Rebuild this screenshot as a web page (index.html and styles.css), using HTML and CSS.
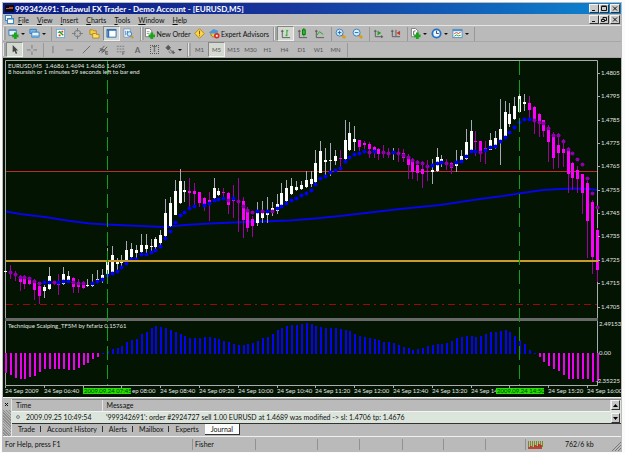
FILE: index.html
```html
<!DOCTYPE html>
<html lang="en">
<head>
    <meta charset="UTF-8">
    <meta name="viewport" content="width=device-width, initial-scale=1.0">
    <title>999342691: Tadawul FX Trader - Demo Account - [EURUSD,M5]</title>
    <link rel="stylesheet" href="styles.css">
</head>
<body>
    <div class="window">
        <header class="title-bar">
            <svg class="app-icon" viewBox="0 0 9 9"><rect y="1" width="9" height="7" fill="#0c0c14"/><path d="M4 3H8V5H4Z" fill="#c83a20"/><path d="M1 4H4V5H1Z" fill="#8c6c30"/></svg>
            <h1>999342691: Tadawul FX Trader - Demo Account - [EURUSD,M5]</h1>
            <div class="window-buttons">
                <button aria-label="Minimize"><svg viewBox="0 0 8 7"><path d="M2 5.5H5"/></svg></button>
                <button aria-label="Maximize"><svg viewBox="0 0 8 7"><path d="M1.5 1.5H6.5V5.5H1.5ZM1.5 1H6.5"/></svg></button>
                <button class="close" aria-label="Close"><svg viewBox="0 0 8 7"><path d="M2 1.5L6 5.5M6 1.5L2 5.5"/></svg></button>
            </div>
        </header>

        <nav class="menu-bar">
            <svg class="menu-icon" viewBox="0 0 9 9"><rect x=".5" y=".5" width="6" height="5" fill="#eef6fc" stroke="#3c86c4"/><rect x="2.5" y="3.5" width="6" height="5" fill="#fff" stroke="#3c86c4"/><path d="M2 4H9" stroke="#3c86c4"/></svg>
            <a href="#file"><u>F</u>ile</a>
            <a href="#view"><u>V</u>iew</a>
            <a href="#insert"><u>I</u>nsert</a>
            <a href="#charts"><u>C</u>harts</a>
            <a href="#tools"><u>T</u>ools</a>
            <a href="#window"><u>W</u>indow</a>
            <a href="#help"><u>H</u>elp</a>
            <div class="window-buttons">
                <button aria-label="Minimize chart"><svg viewBox="0 0 8 7"><path d="M2 5.5H5"/></svg></button>
                <button aria-label="Restore chart"><svg viewBox="0 0 8 7"><path d="M3 3V1.5H6.5V4.5H5M1.5 3.5H4.5V5.5H1.5Z"/></svg></button>
                <button class="close" aria-label="Close chart"><svg viewBox="0 0 8 7"><path d="M2 1.5L6 5.5M6 1.5L2 5.5"/></svg></button>
            </div>
        </nav>

        <div class="toolbar">
            <span class="grip"></span>
            <button class="tool drop" aria-label="New chart"><svg viewBox="0 0 12 12"><path d="M1 2H9V8H1Z" fill="#e4f2fc" stroke="#2f7cc0"/><path d="M1 2.5H9" stroke="#2f7cc0"/><path d="M8 5V12M4.500 8.500H11.500" stroke="#1ba51b" stroke-width="3"/></svg></button>
            <button class="tool drop" aria-label="Profiles"><svg viewBox="0 0 12 12"><path d="M1 1.500H8V6H1Z" fill="#7ab8e8" stroke="#2f7cc0"/><path d="M3 4.500H11V10H3Z" fill="#e4f2fc" stroke="#2f7cc0"/><path d="M3 9H11" stroke="#6aa8dc" stroke-width="2"/></svg></button>
            <span class="sep"></span>
            <button class="tool" aria-label="Market Watch"><svg viewBox="0 0 12 12"><rect x="1.500" y="1.500" width="9" height="9" fill="#fff" stroke="#6aa8dc"/><path d="M2.500 5.500L5 3L7 5Z" fill="#1ba51b"/><path d="M5 4L9 8" stroke="#1ba51b" stroke-width="1.500"/><path d="M4 7H6V9H4ZM7 3H9V5H7Z" fill="#d8342a"/></svg></button>
            <button class="tool" aria-label="Data Window"><svg viewBox="0 0 12 12" fill="none" stroke="#777"><circle cx="6" cy="6" r="3.500"/><path d="M6 0V4M6 8V12M0 6H4M8 6H12"/></svg></button>
            <button class="tool" aria-label="Navigator"><svg viewBox="0 0 12 12"><path d="M1 2H4L5 3H8V7H1Z" fill="#f6cf4a" stroke="#b88614"/><path d="M4 6H7L8 7H11V11H4Z" fill="#fbdf72" stroke="#b88614"/></svg></button>
            <button class="tool pressed" aria-label="Terminal"><svg viewBox="0 0 12 12"><path d="M1 1.500H11V10H1Z" fill="#fff" stroke="#2f6cb0"/><path d="M2.500 1V10M1 2H11" stroke="#2f6cb0" stroke-width="2"/></svg></button>
            <button class="tool" aria-label="Strategy Tester"><svg viewBox="0 0 12 12"><path d="M1 1H8V10H1Z" fill="#fff" stroke="#7a9cbc"/><path d="M3 3V8M5 3V6" stroke="#4a7cac"/><circle cx="7" cy="6.500" r="2.500" fill="#cfe8fa" stroke="#2f7cc0"/><path d="M9 8.500L11 11" stroke="#c89a20" stroke-width="2"/></svg></button>
            <span class="sep"></span>
            <span class="grip"></span>
            <button class="tool wide order"><svg viewBox="0 0 12 12"><path d="M1.500 .5H6L8.500 3V9.500H1.500Z" fill="#fff" stroke="#777"/><path d="M3 4H6M3 6H6" stroke="#999"/><path d="M8.500 5V12M5 8.500H12" stroke="#1ba51b" stroke-width="3"/></svg>New Order</button>
            <button class="tool" aria-label="MetaEditor"><svg viewBox="0 0 12 12"><path d="M6 .8L11.200 6L6 11.200L.8 6Z" fill="#fbd54c" stroke="#b8860b"/><path d="M6 3V7M6 8V9" stroke="#7a5200"/></svg></button>
            <button class="tool wide advisors"><svg viewBox="0 0 12 12"><path d="M0 5L5 1L10 3L9 7L4 8Z" fill="#4a98d8"/><path d="M2 6C2 11 8 11 9 6" fill="#f2c64c" stroke="#9a7420"/><circle cx="8.500" cy="8.500" r="3" fill="#dd2c1e"/><rect x="7.500" y="7.500" width="2" height="2" fill="#fff"/></svg>Expert Advisors</button>
            <span class="sep"></span>
            <span class="grip"></span>
            <button class="tool pressed" aria-label="Bar Chart"><svg viewBox="0 0 12 12" fill="none"><path d="M2.500 2V10.500H11" stroke="#555"/><path d="M1 3.500H4" stroke="#555"/><path d="M7.500 2V9M6 8H7.500M7.500 3H9" stroke="#1ba51b"/></svg></button>
            <button class="tool" aria-label="Candlesticks"><svg viewBox="0 0 12 12" fill="none"><path d="M2.500 2V10.500H11M1 3.500H4" stroke="#555"/><path d="M7.500 0V9" stroke="#087808"/><rect x="6" y="2" width="3" height="5" fill="#1fc41f" stroke="#087808"/></svg></button>
            <button class="tool" aria-label="Line Chart"><svg viewBox="0 0 12 12" fill="none"><path d="M2.500 2V10.500H11M1 3.500H4" stroke="#555"/><path d="M3 8L6 4L10 7" stroke="#1ba51b"/></svg></button>
            <span class="sep"></span>
            <button class="tool" aria-label="Zoom In"><svg viewBox="0 0 12 12"><path d="M7 7L11 11" stroke="#d4a020" stroke-width="3"/><circle cx="5" cy="5" r="3.800" fill="#d8efff" stroke="#2f7cc0"/><path d="M3 5H7M5 3V7" stroke="#1d62a8"/></svg></button>
            <button class="tool" aria-label="Zoom Out"><svg viewBox="0 0 12 12"><path d="M7 7L11 11" stroke="#d4a020" stroke-width="3"/><circle cx="5" cy="5" r="3.800" fill="#d8efff" stroke="#2f7cc0"/><path d="M3 5H7" stroke="#1d62a8"/></svg></button>
            <span class="sep"></span>
            <button class="tool" aria-label="Auto Scroll"><svg viewBox="0 0 12 12"><path d="M2.500 2V9.500H11M1 3.500H4M9.500 8V11" fill="none" stroke="#555"/><path d="M5 3L9 5.500L5 8Z" fill="#1ba51b"/></svg></button>
            <button class="tool" aria-label="Chart Shift"><svg viewBox="0 0 12 12"><path d="M2.500 2V9.500H11M1 3.500H4M6.500 2V9" fill="none" stroke="#555"/><path d="M11 3L7 5.500L11 8Z" fill="#c4382c"/></svg></button>
            <span class="sep"></span>
            <button class="tool drop" aria-label="Indicators"><svg viewBox="0 0 12 12"><path d="M1.500 .5H6L8.500 3V9.500H1.500Z" fill="#fff" stroke="#777"/><path d="M4 8V3.500L6 3" fill="none" stroke="#555"/><path d="M8 5V12M4.500 8.500H11.500" stroke="#1ba51b" stroke-width="3"/></svg></button>
            <button class="tool drop" aria-label="Periods"><svg viewBox="0 0 12 12"><circle cx="6" cy="6" r="4.500" fill="#eaf6ff" stroke="#2370c4" stroke-width="2"/><path d="M6 3V6H8.500" fill="none" stroke="#345"/></svg></button>
            <button class="tool drop" aria-label="Templates"><svg viewBox="0 0 12 12"><rect x="1" y="1.500" width="10" height="9" fill="#fff" stroke="#4a90cc"/><path d="M1 2.500H11" stroke="#4a90cc" stroke-width="2"/><path d="M2.500 6L5 5L7 6L9.500 4.500" fill="none" stroke="#c4382c"/><path d="M2.500 9L5 7.500L7 8.500L9.500 8" fill="none" stroke="#1ba51b"/></svg></button>
            <span class="sep"></span>
        </div>

        <div class="toolbar">
            <span class="grip"></span>
            <button class="tool pressed" aria-label="Cursor"><svg viewBox="0 0 12 12"><path d="M4 1V9L6 7.500L7.500 11L9 10L7.500 7H10Z" fill="#444"/></svg></button>
            <button class="tool" aria-label="Crosshair"><svg viewBox="0 0 12 12" stroke="#777"><path d="M6.500 1V5M6.500 8V12M1 6.500H5M8 6.500H12"/></svg></button>
            <span class="sep"></span>
            <button class="tool" aria-label="Vertical line"><svg viewBox="0 0 12 12" stroke="#777"><path d="M6.500 2V10"/></svg></button>
            <button class="tool" aria-label="Horizontal line"><svg viewBox="0 0 12 12" stroke="#777"><path d="M2 6.500H10"/></svg></button>
            <button class="tool" aria-label="Trendline"><svg viewBox="0 0 12 12" stroke="#666"><path d="M2 10L10 2"/></svg></button>
            <button class="tool" aria-label="Equidistant channel"><svg viewBox="0 0 12 12" stroke="#555" fill="none"><path d="M1 9L7 2M4 10L10 3M2 5L8 7M3 7L7 8.500M8 8.500H11M8 11H11M8.500 8V11"/></svg></button>
            <button class="tool" aria-label="Fibonacci retracement"><svg viewBox="0 0 12 12" stroke="#777" fill="none"><path d="M2 2.500H10M2 5.500H10M2 8.500H7" stroke-dasharray="2 1"/><path d="M8.500 8V12M8 8.500H11M8 10.500H10"/></svg></button>
            <button class="tool letter" aria-label="Text">A</button>
            <button class="tool letter label" aria-label="Text label"><span>T</span></button>
            <button class="tool drop" aria-label="Arrows"><svg viewBox="0 0 12 12" stroke="#555"><path d="M1 4L3.500 1.500L6 4L3.500 6.500Z" fill="#555"/><path d="M5 6L9 9M9 7V11M7 9.500H11M4 8L6 10" fill="none"/></svg></button>
            <span class="sep"></span>
            <span class="grip"></span>
            <button class="tool period">M1</button>
            <button class="tool period pressed">M5</button>
            <button class="tool period">M15</button>
            <button class="tool period">M30</button>
            <button class="tool period">H1</button>
            <button class="tool period">H4</button>
            <button class="tool period">D1</button>
            <button class="tool period">W1</button>
            <button class="tool period">MN</button>
            <span class="sep"></span>
        </div>

        <main class="chart">
            <svg id="chart" viewBox="3 58 618 339" role="img" aria-label="EURUSD M5 chart"></svg>
        </main>

        <section class="terminal">
            <div class="terminal-strip"><button aria-label="Close terminal"><svg viewBox="0 0 5 5"><path d="M1 1L4 4M4 1L1 4" stroke="#111"/></svg></button></div>
            <div class="terminal-main">
                <div class="journal">
                    <table>
                        <thead>
                            <tr><th class="time">Time</th><th>Message</th></tr>
                        </thead>
                        <tbody>
                            <tr><td class="time"><i></i>2009.09.25 10:49:54</td><td>'999342691': order #2924727 sell 1.00 EURUSD at 1.4689 was modified -&gt; sl: 1.4706 tp: 1.4676</td></tr>
                        </tbody>
                    </table>
                    <div class="scroll">
                        <button aria-label="Scroll up"><svg viewBox="0 0 7 7"><path d="M1 5L3.500 2L6 5Z"/></svg></button>
                        <button aria-label="Scroll down"><svg viewBox="0 0 7 7"><path d="M1 2L3.500 5L6 2Z"/></svg></button>
                    </div>
                </div>
                <div class="tabs">
                    <button>Trade</button>
                    <button>Account History</button>
                    <button>Alerts</button>
                    <button>Mailbox</button>
                    <button>Experts</button>
                    <button class="active">Journal</button>
                </div>
            </div>
        </section>

        <footer class="status-bar">
            <span>For Help, press F1</span>
            <span>Fisher</span>
            <span></span>
            <span></span>
            <span></span>
            <span></span>
            <span></span>
            <span></span>
            <span class="traffic">
                <svg viewBox="0 0 15 8"><path d="M0 3H15" stroke="#7c8c1c" stroke-width="6" stroke-dasharray="1 1"/><path d="M1 8V6M3 8V5M5 8V6M7 8V4M9 8V5M11 8V3M13 8V4" stroke="#b82010" stroke-width="1.500"/></svg>
                762/6 kb
            </span>
            <svg class="size-grip" viewBox="0 0 9 9"><path d="M0 9L9 0M3 9L9 3M6 9L9 6" stroke="#777"/></svg>
        </footer>
    </div>

    <script src="chart.js"></script>
</body>
</html>
```

FILE: styles.css
```css
:root {
    --face: #b9bab9;
    --light: #e4e6e4;
    --shadow: #858685;
    --pressed: #d3d9d1;
}

* {
    box-sizing: border-box;
    margin: 0;
    padding: 0;
}

body {
    background: #fbfbfb;
    padding: 2px 3px 2px 2px;
    font-family: Lato, "Liberation Sans", Arial, sans-serif;
    font-size: 7px;
    color: #111;
}

button {
    font: inherit;
    color: inherit;
    background: none;
    border: none;
}

svg {
    display: block;
}

.window {
    background: var(--face);
    padding: 1px;
}

/* title bar */
.title-bar {
    display: flex;
    align-items: center;
    height: 11px;
    padding: 0 1px 0 2px;
    background: linear-gradient(90deg, #0b1a84, #17359c 45%, #1258b4 70%, #0c86d0);
    color: #fff;
}

.app-icon,
.menu-icon {
    width: 9px;
    height: 9px;
    margin-right: 1px;
}

h1 {
    font-size: 8px;
    line-height: 10px;
    font-weight: bold;
    white-space: nowrap;
}

.window-buttons {
    display: flex;
    margin-left: auto;
}

.window-buttons button {
    width: 10px;
    height: 9px;
    background: #c9cac9;
    border: 1px solid;
    border-color: #f4f4f4 #333 #333 #f4f4f4;
}

.window-buttons .close {
    margin-left: 1px;
}

.window-buttons svg {
    width: 8px;
    height: 7px;
    fill: none;
    stroke: #111;
}

/* menu */
.menu-bar {
    display: flex;
    align-items: center;
    height: 12px;
    padding: 0 1px 0 2px;
    border-bottom: 1px solid var(--light);
}

.menu-bar a {
    color: inherit;
    text-decoration: none;
    margin-left: 4px;
    margin-right: 4px;
}

.menu-bar .menu-icon {
    margin-right: 0;
}

/* toolbars */
.toolbar {
    display: flex;
    align-items: center;
    height: 16px;
    border-bottom: 1px solid #a6a7a6;
}

.grip {
    width: 3px;
    height: 13px;
    background: #a2a3a2;
    border-left: 1px solid var(--light);
}

.sep {
    width: 4px;
    height: 14px;
    border-right: 1px solid #979897;
}

.tool {
    display: flex;
    align-items: center;
    justify-content: center;
    width: 17px;
    height: 15px;
}

.tool svg {
    width: 11px;
    height: 11px;
    flex-shrink: 0;
}

.drop {
    width: 21px;
    gap: 2px;
}

.drop::after {
    content: "";
    border: 2px solid transparent;
    border-top-color: #111;
    border-bottom: none;
}

.wide {
    gap: 1px;
    white-space: nowrap;
}

.order {
    width: 47px;
}

.advisors {
    width: 62px;
}

.pressed {
    background: var(--pressed);
    border: 1px solid;
    border-color: var(--shadow) #f0f0f0 #f0f0f0 var(--shadow);
}

.letter {
    font-size: 8px;
    font-weight: bold;
    color: #666;
}

.label span {
    border: 1px dotted #555;
    line-height: 7px;
    padding: 0 1px;
}

.period {
    font-size: 6px;
    color: #555;
}

/* chart */
.chart svg {
    width: 100%;
    height: auto;
    background: #031403;
    font-size: 6px;
    fill: #e4e4e4;
}

.frame {
    fill: none;
    stroke: #a9abb0;
}

.marker-text {
    fill: #06330a;
}

.scale-end {
    text-anchor: end;
}

.average {
    fill: none;
    stroke: #0505e6;
    stroke-width: 2;
}

.day-line {
    fill: none;
    stroke: #0ca01c;
    stroke-dasharray: 14 5;
}

/* terminal */
.terminal {
    display: flex;
    border-top: 1px solid #f0f0f0;
    padding-top: 1px;
}

.terminal-strip {
    width: 9px;
    border-right: 1px solid var(--light);
    background: repeating-linear-gradient(45deg, #8c8d8c 0 1px, #b4b5b4 1px 2px);
}

.terminal-strip button {
    display: block;
    width: 8px;
    height: 11px;
    padding: 2px 1px;
    background: var(--face);
}

.terminal-strip svg {
    width: 5px;
    height: 5px;
}

.terminal-main {
    flex: 1;
}

.journal {
    display: flex;
    border-top: 1px solid var(--shadow);
    border-bottom: 1px solid #333;
    background: #dce5dc;
}

.journal table {
    flex: 1;
    border-collapse: collapse;
    table-layout: fixed;
}

.journal th {
    height: 11px;
    background: var(--face);
    font-weight: normal;
    text-align: left;
    padding-left: 4px;
    border-bottom: 1px solid #f4f4f4;
    border-right: 1px solid var(--light);
}

.journal td {
    height: 12px;
    padding-left: 4px;
    white-space: nowrap;
}

.journal .time {
    width: 90px;
}

.journal i {
    display: inline-block;
    width: 4px;
    height: 4px;
    margin-right: 6px;
    border: 1px solid #888;
    border-radius: 50%;
    background: #c8c8c8;
    vertical-align: 1px;
}

.scroll {
    display: flex;
    flex-direction: column;
    justify-content: space-between;
    width: 10px;
}

.scroll button {
    width: 9px;
    height: 10px;
    padding: 1px 0;
    background: #c6c7c6;
    border: 1px solid;
    border-color: #f4f4f4 #333 #333 #f4f4f4;
}

.scroll svg {
    width: 7px;
    height: 7px;
}

.tabs {
    display: flex;
    height: 12px;
    align-items: flex-start;
}

.tabs button {
    height: 10px;
    padding: 0 6px;
    line-height: 10px;
    background: linear-gradient(#333, #333) right center / 1px 6px no-repeat;
}

.tabs .active {
    height: 11px;
    background: #fcfcfc;
    border-right: 1px solid #333;
    border-bottom: 1px solid #333;
}

.tabs button:nth-last-child(2) {
    background: none;
}

/* status bar */
.status-bar {
    display: grid;
    grid-template-columns: 190fr 63fr 62fr 42fr 43fr 41fr 42fr 40fr 86fr 9px;
    align-items: center;
    height: 15px;
    border-top: 1px solid #f0f0f0;
    padding-top: 1px;
}

.status-bar span {
    height: 11px;
    line-height: 11px;
    padding-left: 2px;
    border-right: 1px solid #909190;
    white-space: nowrap;
}

.status-bar .traffic {
    display: flex;
    align-items: center;
    gap: 22px;
    border-right: none;
}

.traffic svg {
    width: 15px;
    height: 8px;
}

.size-grip {
    width: 9px;
    height: 9px;
    align-self: end;
}
```

FILE: chart.js
```javascript
const svg = document.getElementById('chart');
const step = 4.85;
const left = 5.5;

// high, low, body top, body bottom, rising (1) or falling (0), dot position, dot colour
const bars = [
    [267,274,271,272,1], [265,279,272,274,0,272,'p'], [271,281,273,275,0,274,'p'], [275,291,277,282,0,277,'p'],
    [275,289,277,284,0,277,'p'], [277,285,279,284,0,278,'p'], [279,300,281,290,0,281,'p'], [282,304,286,296,0,283,'p'],
    [285,298,287,291,1,282,'b'], [267,290,276,289,1,282,'b'], [281,285,282,283,0,282,'p'], [274,295,281,285,0,282,'b'],
    [267,285,274,284,1,281,'b'], [271,283,276,280,1,281,'b'], [277,293,278,287,0,282,'p'], [279,293,282,287,0,283,'p'],
    [281,289,283,288,0,283,'p'], [279,287,285,286,1], [274,287,282,286,1,283,'b'], [270,283,279,281,1,281,'b'],
    [269,283,275,278,1,279,'b'], [248,280,262,276,1,275,'b'], [246,272,255,272,1,273,'b'], [258,271,262,264,1,271,'b'],
    [255,268,261,263,1,267,'b'], [241,264,250,262,1,263,'b'], [243,260,249,257,1,259,'b'], [245,258,250,253,1,259,'b'],
    [234,254,245,252,1,254,'b'], [234,254,245,249,1,254,'b'], [239,254,246,247,1,252,'b'], [237,250,239,247,1,250,'b'],
    [230,247,235,243,1,246,'b'], [199,240,213,236,1,238,'b'], [197,227,203,226,1,231,'b'], [180,215,191,215,1,222,'b'],
    [169,204,181,203,1,215,'b'], [181,202,190,192,1,212,'b'], [178,208,191,193,0,208,'b'], [183,205,191,194,0,206,'b'],
    [192,207,192,203,0], [197,211,198,205,0,205,'b'], [192,221,200,202,0,203,'b'], [178,200,188,198,1,200,'b'],
    [188,196,191,195,1,199,'b'], [188,198,192,193,0,198,'b'], [192,214,193,205,0,200,'p'], [185,218,198,201,0,198,'b'],
    [178,232,200,202,0,201,'p'], [197,238,201,220,0,206,'p'], [207,232,209,228,0,210,'p'], [216,237,219,226,0,212,'p'],
    [202,226,213,223,1,211,'b'], [201,223,213,218,1,211,'p'], [197,223,212,215,1,211,'b'], [202,216,208,212,1,211,'p'],
    [194,214,204,211,1,208,'b'], [183,207,193,206,1,206,'b'], [180,203,188,201,1,203,'b'], [178,195,186,194,1,200,'b'],
    [181,191,187,190,1,198,'b'], [181,190,185,189,1,195,'b'], [171,188,180,187,1,193,'b'], [171,187,179,184,1,190,'b'],
    [150,185,163,182,1,184,'b'], [141,173,151,173,1,178,'b'], [148,177,160,162,1,176,'b'], [143,176,160,161,1,172,'b'],
    [150,165,156,161,1,170,'b'], [150,167,158,159,0,168,'b'], [120,160,140,159,1,161,'b'], [122,151,133,150,1,157,'b'],
    [126,151,139,142,1,154,'b'], [140,151,140,147,0,153,'b'], [141,149,143,145,0,151,'b'], [142,158,144,149,0,152,'p'],
    [146,158,147,150,0,151,'b'], [148,160,149,154,0], [145,158,151,153,0,152,'p'], [148,158,152,153,0,153,'p'],
    [148,160,151,153,1,152,'b'], [148,162,152,153,0,153,'p'], [149,162,153,158,0,155,'p'], [154,179,158,165,0,157,'p'],
    [158,179,160,172,0,160,'p'], [160,181,165,173,0,162,'p'], [161,188,169,174,0,163,'p'], [160,181,171,172,0,166,'p'],
    [159,184,170,172,1,165,'b'], [148,172,157,171,1,163,'b'], [155,167,159,161,1,162,'b'], [159,170,162,164,0,163,'p'],
    [162,174,163,168,0,165,'p'], [150,172,163,166,1,162,'b'], [150,163,156,160,1,161,'b'], [129,160,142,159,1,156,'b'],
    [120,152,131,150,1,151,'b'], [131,156,141,142,0,151,'b'], [141,162,141,151,0,152,'p'], [141,164,148,151,0,150,'b'],
    [133,150,140,150,1,147,'b'], [131,149,138,146,1,146,'b'], [99,165,129,141,1,141,'b'], [101,138,112,136,1,137,'b'],
    [103,127,114,124,1,132,'b'], [97,120,106,119,1,127,'b'], [90,113,96,112,1,122,'b'], [94,111,102,104,1,119,'b'],
    [96,118,103,110,0,119,'b'], [106,134,107,122,0,120,'p'], [113,137,114,122,0,122,'p'], [120,137,120,131,0,123,'p'],
    [125,162,129,142,0,128,'p'], [132,169,134,158,0,135,'p'], [133,168,145,153,0,135,'p'], [139,167,149,153,0,141,'p'],
    [147,193,151,174,0,149,'p'], [162,190,163,178,0,153,'p'], [166,193,170,179,0,159,'p'], [174,214,174,193,0,164,'p'],
    [181,258,183,221,0,178,'p'], [200,274,202,257,0,193,'p'], [228,282,230,270,0,207,'p']
];

// indicator histogram, one value per bar
const histogram = [
    -20,-22,-25,-26,-26,-24,-23,-19,-16,-16,-16,-16,-16,-17,-17,-15,-12,-10,-6,-4,
    1,3,5,6,8,12,14,15,20,22,26,28,27,26,24,22,20,18,16,16,
    16,17,17,16,15,13,12,10,9,9,10,11,13,16,17,20,24,26,28,29,
    29,30,31,30,28,27,26,26,26,25,24,23,20,18,17,16,15,14,12,12,
    11,9,7,6,4,5,6,8,9,10,10,11,13,16,17,18,18,17,18,20,
    22,22,23,24,22,18,14,10,4,1,-4,-9,-13,-16,-18,-22,-26,-26,-26,-26,
    -26,-29,-28
];

// the day markers cover the 07:20 and 14:40 labels and part of their neighbours
const times = ['24 Sep 2009', '24 Sep 06:40', '', 'ep 08:00', '24 Sep 08:40', '24 Sep 09:20',
    '24 Sep 10:00', '24 Sep 10:40', '24 Sep 11:20', '24 Sep 12:00', '24 Sep 12:40',
    '24 Sep 13:20', '24 Sep 14', '', '24 Sep 15:20', '24 Sep 16:00'];

let out = '';

function line(x1, y1, x2, y2, attrs) {
    out += `<path d="M${x1} ${y1}L${x2} ${y2}" ${attrs}/>`;
}

function rect(x, y, w, h, fill) {
    out += `<rect x="${x}" y="${y}" width="${w}" height="${h}" fill="${fill}"/>`;
}

function text(x, y, str, cls = 'text') {
    out += `<text x="${x}" y="${y}" class="${cls}">${str}</text>`;
}

// frame and price levels
out += '<path class="frame" d="M5.5 385.5V60.5H597.5V385.5H5.5"/>';
rect(5, 318, 593, 3, '#686868');
rect(6, 171, 591, 1, '#c02c2c');
line(6, 304.5, 597, 304.5, 'stroke="#a00808" stroke-dasharray="7 4 2 4"');

// moving average
out += '<path class="average" d="M6 211.5L20 214L45 217L70 221L90 223.500L107 224.500L140 226L165 227L185 225L210 223.500L247 222L290 220.500L315 218.500L340 216L370 212.500L400 209L440 205L480 199L503 196L522 193L543 190L560 189L573 188.500L590 189L597 190"/>';

// candles
bars.forEach(([high, low, top, bottom, up], i) => {
    const x = Math.round(left + i * step - 0.5);
    rect(x, high, 1, low - high, up ? '#a8a8b8' : '#a000a0');
    rect(x - 1, top, 3, bottom - top, up ? '#ffffff' : '#ff00ff');
});
bars.forEach(([, , , , , dot, colour], i) => {
    if (!dot) return;
    const x = Math.round(left + i * step - 0.5) + 0.5;
    out += `<circle cx="${x}" cy="${dot + 0.5}" r="2" fill="${colour === 'b' ? '#0000ff' : '#9000b0'}"/>`;
});

rect(6, 260, 592, 2, '#c89b2c');

// histogram
histogram.forEach((value, i) => {
    const x = Math.round(left + i * step - 0.5);
    rect(x, value > 0 ? 354 - value : 353, 2, Math.abs(value), value > 0 ? '#0505f0' : '#f000f0');
});

// day separators
line(107.5, 61, 107.5, 385, 'class="day-line"');
line(519.5, 61, 519.5, 385, 'class="day-line"');

// price scale
for (let i = 0; i < 11; i++) {
    const y = Math.round(73 + i * 23.35);
    line(598, y + 0.5, 600, y + 0.5, 'class="frame"');
    text(601, y + 2, (1.4805 - i * 0.001).toFixed(4));
}
text(599, 326, '2.49153');
text(599, 355, '0.00');
text(620, 383, '-2.35225', 'scale-end');

// time scale
times.forEach((time, i) => {
    const x = Math.round(5 + i * 38.8);
    line(x + 0.5, 386, x + 0.5, 388, 'class="frame"');
    if (time) text(time.startsWith('ep') ? 132 : x, 393, time);
});
rect(83, 388, 48, 6, '#25e000');
text(84, 393, '2009.09.24 07:45', 'marker-text');
rect(496, 388, 48, 6, '#25e000');
text(497, 393, '2009.09.24 14:50', 'marker-text');

text(8, 68, 'EURUSD,M5&#160; 1.4686 1.4694 1.4686 1.4693');
text(8, 74, '8 hoursish or 1 minutes 59 seconds left to bar end');
text(8, 328, 'Technique Scalping_TF5M by fxfariz 0.15761');

svg.innerHTML = out;
```
